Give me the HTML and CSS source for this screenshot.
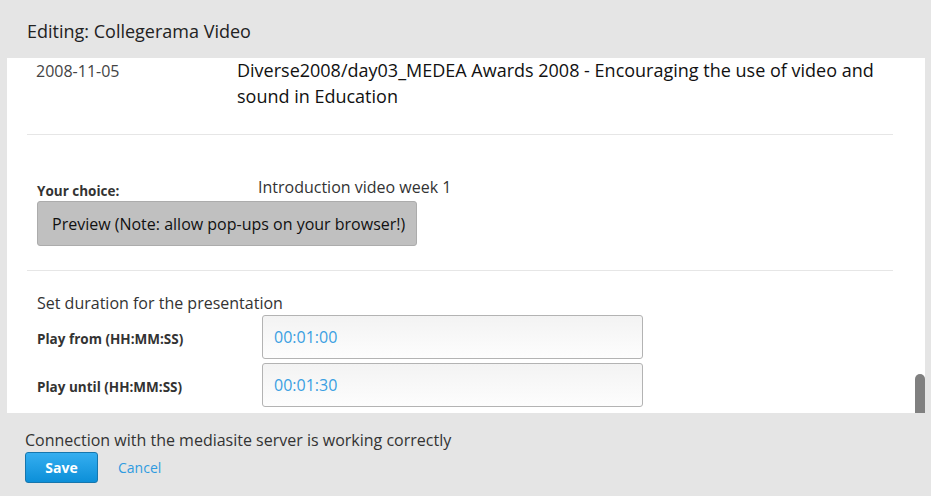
FILE: index.html
```
<!DOCTYPE html>
<html>
<head>
<meta charset="utf-8">
<link rel="stylesheet" href="styles.css">
</head>
<body>
<div class="dialog">
  <div class="header">Editing: Collegerama Video</div>
  <div class="panel">
    <div class="content">
      <div class="row-item">
        <div class="date">2008-11-05</div>
        <div class="title">Diverse2008/day03_MEDEA Awards 2008 - Encouraging the use of video and sound in Education</div>
      </div>
      <div class="divider"></div>
      <div class="choice">
        <div class="choice-line">
          <span class="label">Your choice:</span>
          <span class="choice-value">Introduction video week 1</span>
        </div>
        <button class="preview">Preview (Note: allow pop-ups on your browser!)</button>
      </div>
      <div class="divider"></div>
      <div class="duration">
        <div class="duration-title">Set duration for the presentation</div>
        <div class="field">
          <span class="label">Play from (HH:MM:SS)</span>
          <div class="input">00:01:00</div>
        </div>
        <div class="field">
          <span class="label">Play until (HH:MM:SS)</span>
          <div class="input">00:01:30</div>
        </div>
      </div>
    </div>
    <div class="scrollbar"><div class="thumb"></div></div>
  </div>
  <div class="footer">
    <div class="status">Connection with the mediasite server is working correctly</div>
    <div class="actions">
      <button class="save">Save</button>
      <a class="cancel">Cancel</a>
    </div>
  </div>
</div>
</body>
</html>
```
FILE: styles.css
```
html, body {
  margin: 0;
  padding: 0;
  background: #e5e5e5;
  font-family: "Open Sans", "Liberation Sans", sans-serif;
}
.dialog {
  width: 931px;
  height: 496px;
  background: #e5e5e5;
  overflow: hidden;
}
.header {
  height: 58px;
  box-sizing: border-box;
  padding: 18px 0 0 27px;
  font-size: 18px;
  line-height: 26px;
  color: #222;
}
.panel {
  margin-left: 7px;
  width: 918px;
  height: 355px;
  background: #fff;
  display: flex;
  overflow: hidden;
}
.content {
  flex: 1;
  padding: 0 20px;
}
.scrollbar {
  width: 12px;
  display: flex;
  flex-direction: column;
  justify-content: flex-end;
  align-items: center;
}
.thumb {
  width: 10px;
  height: 39px;
  background: #808080;
  border-radius: 5px 5px 0 0;
  margin-left: 2px;
}
.row-item {
  display: flex;
  padding: 0 0 0 9px;
  height: 76px;
}
.date {
  width: 201px;
  font-size: 16px;
  color: #444;
  line-height: 26px;
}
.title {
  font-size: 18px;
  color: #111;
  line-height: 26px;
  width: 650px;
  margin-top: -1px;
}
.divider {
  height: 1px;
  background: #e6e6e6;
  width: 866px;
}
.choice {
  padding: 43px 0 0 10px;
  height: 92px;
}
.choice-line {
  display: flex;
  align-items: baseline;
  height: 18px;
}
.label {
  font-size: 13.5px;
  font-weight: 700;
  color: #333;
}
.choice .label {
  width: 221px;
  line-height: 18px;
  position: relative;
  top: 3px;
}
.choice-value {
  font-size: 16px;
  color: #333;
  line-height: 18px;
}
.preview {
  margin-top: 5px;
  width: 380px;
  height: 45px;
  background: #c0c0c0;
  border: 1px solid #acacac;
  border-radius: 3px;
  font-family: "Open Sans", "Liberation Sans", sans-serif;
  font-size: 16px;
  color: #111;
  text-align: left;
  padding: 0 0 0 14px;
}
.duration {
  padding: 21px 0 0 10px;
}
.duration-title {
  font-size: 16px;
  color: #333;
  line-height: 22px;
}
.field {
  display: flex;
  align-items: center;
  height: 44px;
  margin-top: 1px;
  margin-bottom: 4px;
}
.field .label {
  width: 225px;
  padding-top: 4px;
}
.input {
  border: 1px solid #b3b3b3;
  border-radius: 3px;
  background: linear-gradient(#f3f3f3, #fdfdfd);
  box-sizing: border-box;
  width: 381px;
  height: 44px;
  padding-left: 11px;
  display: flex;
  align-items: center;
  font-size: 16px;
  color: #3a9fe2;
}
.footer {
  padding: 15px 0 0 25px;
}
.status {
  font-size: 16px;
  color: #333;
  line-height: 24px;
}
.actions {
  display: flex;
  align-items: center;
  gap: 20px;
}
.save {
  width: 73px;
  height: 31px;
  background: linear-gradient(#35aef0, #0c8fd8);
  border: 1px solid #1676ad;
  border-radius: 3px;
  color: #fff;
  font-family: "Open Sans", "Liberation Sans", sans-serif;
  font-weight: 700;
  font-size: 14px;
  padding: 0;
}
.cancel {
  font-size: 14px;
  color: #2f9be0;
}
```
